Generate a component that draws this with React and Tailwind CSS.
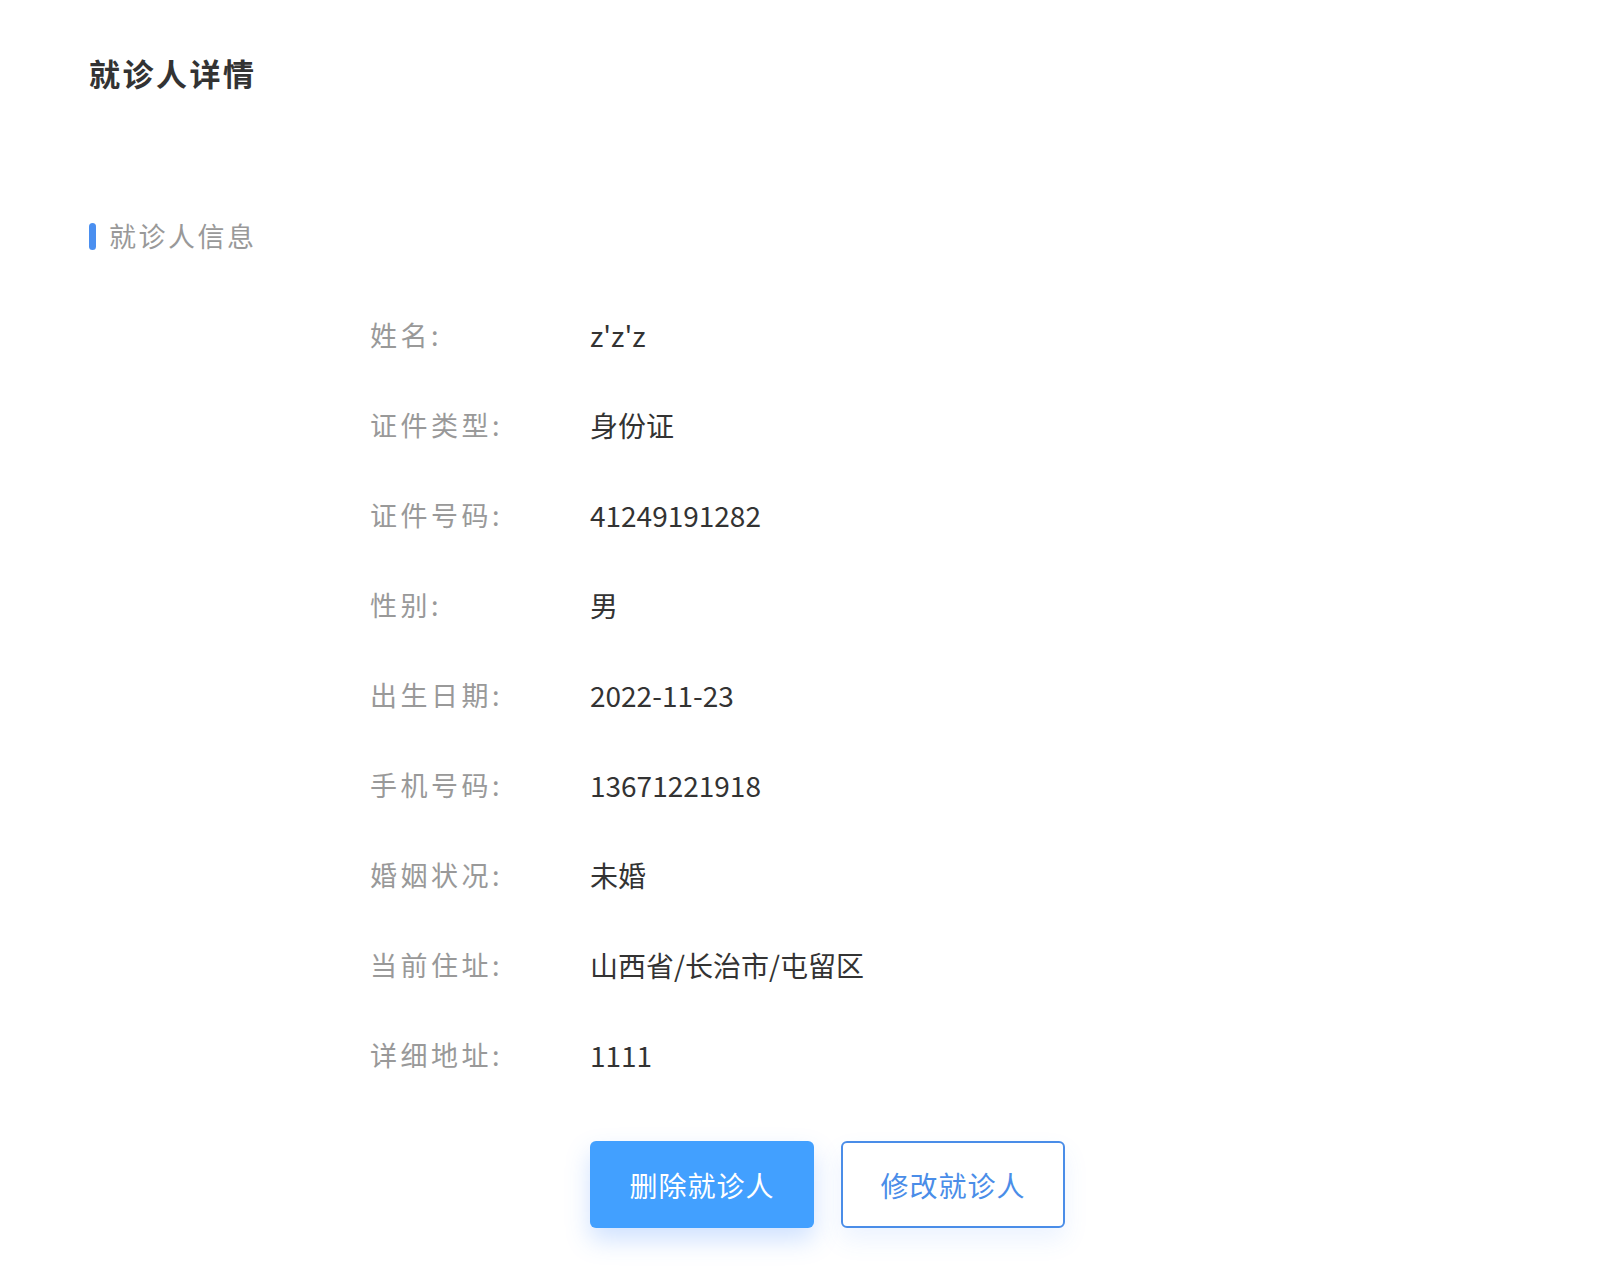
const rows = [
  ['姓名', "z'z'z"],
  ['证件类型', '身份证'],
  ['证件号码', '41249191282'],
  ['性别', '男'],
  ['出生日期', '2022-11-23'],
  ['手机号码', '13671221918'],
  ['婚姻状况', '未婚'],
  ['当前住址', '山西省/长治市/屯留区'],
  ['详细地址', '1111'],
]

export default function App() {
  return (
    <div
      className="min-h-screen bg-white pl-[89px] pt-[51px]"
      style={{ fontFamily: '"Noto Sans CJK SC", "Noto Sans", sans-serif' }}
    >
      <h1 className="text-[31px] leading-[44px] font-bold tracking-[2.5px] text-[#333]">就诊人详情</h1>

      <div className="mt-[121px] flex items-center h-[40px]">
        <span className="w-[7px] h-[27px] rounded-full bg-[#4a8ff0]" />
        <span className="ml-[13px] text-[27px] tracking-[2.5px] text-[#999]">就诊人信息</span>
      </div>

      <div className="ml-[281px] mt-[34px]">
        {rows.map(([k, v]) => (
          <div key={k} className="flex items-center h-[90px]">
            <span className="w-[220px] text-[27px] tracking-[3.5px] text-[#999]">{k}:</span>
            <span className="text-[28px] text-[#333]">{v}</span>
          </div>
        ))}

        <div className="flex gap-[27px] ml-[220px] mt-[41px]">
          <button className="w-[224px] h-[87px] rounded-[6px] bg-[#42a0ff] text-white text-[28px] tracking-[1px] shadow-[0_12px_24px_rgba(66,140,255,0.25)]">
            删除就诊人
          </button>
          <button className="w-[224px] h-[87px] rounded-[6px] border-2 border-[#4a8de8] bg-white text-[#4a8de8] text-[28px] tracking-[1px] shadow-[0_12px_24px_rgba(66,140,255,0.1)]">
            修改就诊人
          </button>
        </div>
      </div>
    </div>
  )
}
